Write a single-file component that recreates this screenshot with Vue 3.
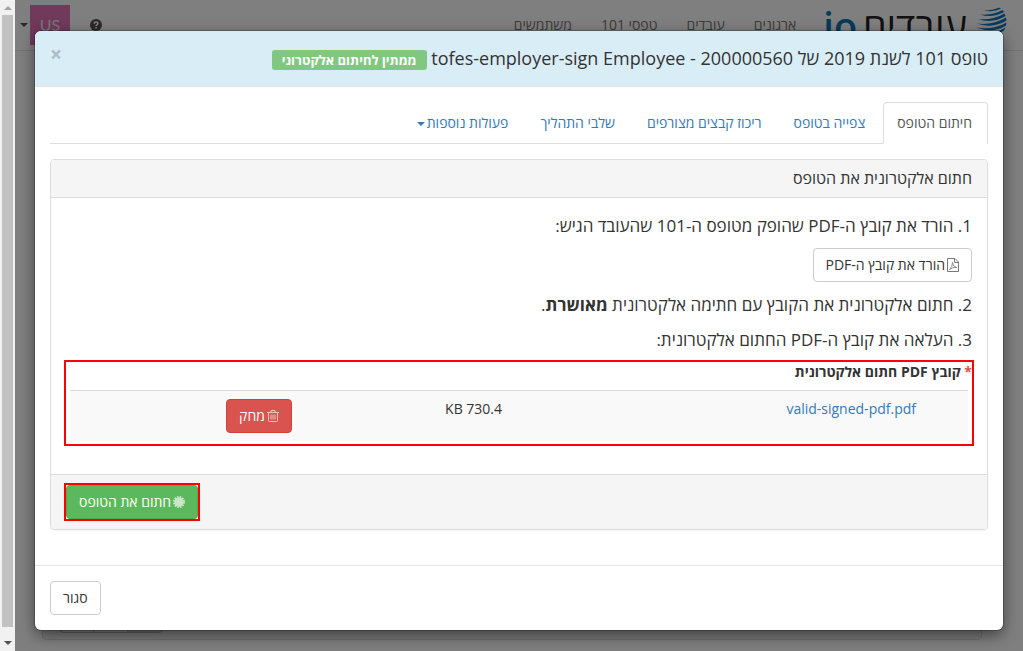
<script setup>
import { ref } from 'vue'

const navLinks = ['ארגונים', 'עובדים', 'טפסי 101', 'משתמשים']
const tabs = [
  { label: 'חיתום הטופס' },
  { label: 'צפייה בטופס' },
  { label: 'ריכוז קבצים מצורפים' },
  { label: 'שלבי התהליך' },
  { label: 'פעולות נוספות', dropdown: true },
]
const activeTab = ref(0)
const files = [{ name: 'valid-signed-pdf.pdf', size: '730.4 KB' }]
</script>

<template>
  <div class="viewport" dir="rtl">
    <div class="screen">
      <div class="page">
        <header class="navbar">
          <a class="brand" href="#">
            <svg class="brand-mark" viewBox="0 0 32 32" width="32" height="32" fill="#0c75b8">
              <path d="M9 4.500 Q18 4.500 24 1.500 L26 2.800 Q18 6.500 9 4.500 Z" />
              <path d="M5 8.500 Q18 9.500 27.500 4 L29 6 Q17 12.500 5 8.500 Z" />
              <path d="M3 13 Q18 14.500 29.500 7.500 L30.500 10 Q17 18 3 13 Z" />
              <path d="M1.500 17.500 Q18 19.500 31 11.500 L31.500 14.500 Q18 23 1.500 17.500 Z" />
              <path d="M1.500 21.500 Q18 24.500 31.500 16.500 L31 19.500 Q18 28 1.500 21.500 Z" />
              <path d="M4 25.500 Q18 29 30.500 21.500 L29 24.500 Q18 31.500 4 25.500 Z" />
            </svg>
            <span class="brand-name">עובדים</span>
            <span class="brand-io">io</span>
          </a>
          <nav class="nav-links">
            <a v-for="link in navLinks" :key="link" href="#">{{ link }}</a>
          </nav>
          <div class="nav-user">
            <a class="help" href="#" aria-label="עזרה">
              <svg viewBox="0 0 12 12" width="12" height="12">
                <circle cx="6" cy="6" r="6" fill="#555" />
                <path d="M4.200 4.700 Q4.200 2.900 6 2.900 Q7.900 2.900 7.900 4.500 Q7.900 5.300 6.900 5.900 Q6.100 6.300 6.100 7.100" fill="none" stroke="#fff" stroke-width="1.500" />
                <rect x="5.300" y="8" width="1.600" height="1.500" fill="#fff" />
              </svg>
            </a>
            <button class="avatar" type="button">US</button>
            <span class="caret dark"></span>
          </div>
        </header>
        <div class="back-panel">
          <div class="pager"><span></span><span></span><span class="on"></span></div>
        </div>
      </div>

      <div class="backdrop">
        <section class="modal" role="dialog" aria-labelledby="modal-title">
          <header class="modal-header">
            <h4 id="modal-title">
              טופס 101 לשנת 2019 של 200000560 - tofes-employer-sign Employee
              <span class="label">ממתין לחיתום אלקטרוני</span>
            </h4>
            <button class="close" type="button" aria-label="סגור חלון">×</button>
          </header>

          <div class="modal-body">
            <ul class="tabs">
              <li v-for="(tab, i) in tabs" :key="tab.label">
                <a href="#" :class="{ active: i === activeTab }" @click.prevent="activeTab = i">{{ tab.label }}<span v-if="tab.dropdown" class="caret"></span></a>
              </li>
            </ul>

            <div class="panel">
              <h3 class="panel-heading">חתום אלקטרונית את הטופס</h3>
              <div class="panel-body">
                <p class="step">1. הורד את קובץ ה-PDF שהופק מטופס ה-101 שהעובד הגיש:</p>
                <button class="btn download" type="button">
                  <svg viewBox="0 0 12 14" width="12" height="14" fill="none" stroke="currentColor">
                    <path d="M.5 .5 H8 L11.500 4 V13.500 H.5 Z M7.500 .5 V4.500 H11.500" />
                    <path d="M2.500 11.500 Q5.500 9 5.500 4.500 Q6 9 9.700 9.500 Q6 8.700 2.500 11.500" stroke-width=".8" />
                  </svg>
                  הורד את קובץ ה-PDF
                </button>
                <p class="step">2. חתום אלקטרונית את הקובץ עם חתימה אלקטרונית <strong>מאושרת</strong>.</p>
                <p class="step">3. העלאה את קובץ ה-PDF החתום אלקטרונית:</p>
                <div class="upload marked">
                  <div id="upload-label" class="upload-label"><span class="req">*</span> קובץ PDF חתום אלקטרונית</div>
                  <table aria-labelledby="upload-label">
                    <colgroup><col class="c-preview"><col class="c-name"><col class="c-size"><col></colgroup>
                    <tbody>
                      <tr v-for="file in files" :key="file.name">
                        <td></td>
                        <td><a href="#">{{ file.name }}</a></td>
                        <td>{{ file.size }}</td>
                        <td>
                          <button class="btn danger" type="button">
                            <svg viewBox="0 0 12 12" width="12" height="12" fill="none" stroke="currentColor">
                              <path d="M0 2.500 H12 M4 2.500 V.5 H8 V2.500 M1.500 2.500 V10.500 Q1.500 11.500 2.500 11.500 H9.500 Q10.500 11.500 10.500 10.500 V2.500 M4 4.500 V9.500 M6 4.500 V9.500 M8 4.500 V9.500" />
                            </svg>
                            מחק
                          </button>
                        </td>
                      </tr>
                    </tbody>
                  </table>
                </div>
              </div>
              <div class="panel-footer">
                <div class="sign marked">
                  <button class="btn success" type="button">
                    <svg viewBox="0 0 12 12" width="12" height="12">
                      <circle cx="6" cy="6" r="4.800" fill="currentColor" />
                      <circle cx="6" cy="6" r="5.200" fill="none" stroke="currentColor" stroke-width="1.800" stroke-dasharray="1.600 1.123" />
                    </svg>
                    חתום את הטופס
                  </button>
                </div>
              </div>
            </div>
          </div>

          <footer class="modal-footer">
            <button class="btn" type="button">סגור</button>
          </footer>
        </section>
      </div>
    </div>

    <div class="scrollbar" aria-hidden="true">
      <span class="arrow up"></span>
      <span class="thumb"></span>
      <span class="arrow down"></span>
    </div>
  </div>
</template>

<style>
body {
  margin: 0;
}
</style>

<style scoped>
.viewport,
.viewport * {
  box-sizing: border-box;
}
.viewport {
  display: flex;
  min-height: 100vh;
  font: 14px/20px "Open Sans", sans-serif;
  color: #333;
}
a {
  color: #337ab7;
  text-decoration: none;
}
button {
  font: inherit;
  cursor: pointer;
}
.screen {
  position: relative;
  flex: 1;
  min-width: 0;
}
.scrollbar {
  width: 15px;
  background: #f1f1f1;
  display: flex;
  flex-direction: column;
  align-items: center;
  padding: 6px 0;
  gap: 5px;
}
.thumb {
  flex: 1;
  width: 11px;
  background: #c1c1c1;
  margin-bottom: 9px;
}
.arrow {
  border: 4px solid transparent;
}
.up {
  border-top: 0;
  border-bottom-color: #a3a3a3;
}
.down {
  border-bottom: 0;
  border-top-color: #505050;
}

.page {
  min-height: 100%;
  display: flex;
  flex-direction: column;
  background: #fff;
  padding-bottom: 11px;
}
.navbar {
  display: flex;
  align-items: center;
  height: 51px;
  border-bottom: 1px solid #e7e7e7;
  padding-right: 16px;
}
.brand {
  display: flex;
  align-items: center;
  font-size: 38px;
  line-height: 50px;
}
.brand-mark {
  margin-bottom: 6px;
}
.brand-name {
  margin-right: 8px;
  color: #222;
  font-weight: 500;
}
.brand-io {
  margin-right: 6px;
  color: #0c75b8;
  font-weight: 600;
}
.nav-links {
  display: flex;
  gap: 29px;
  margin-right: 27px;
}
.nav-links a {
  color: #777;
}
.nav-user {
  display: flex;
  align-items: center;
  margin-right: auto;
  padding-left: 5px;
}
.help {
  display: flex;
  margin-left: 20px;
}
.avatar {
  width: 40px;
  height: 40px;
  padding: 0;
  border: 0;
  background: #e273b9;
  color: #eee;
  font-family: Lato, sans-serif;
  font-size: 16px;
}
.caret {
  display: inline-block;
  margin-right: 2px;
  vertical-align: middle;
  border: 4px solid transparent;
  border-top-color: currentColor;
  border-bottom: 0;
}
.dark {
  color: #555;
}
.back-panel {
  flex: 1;
  display: flex;
  align-items: flex-end;
  justify-content: flex-end;
  margin: 20px 41px 0 27px;
  padding: 0 16px 6px;
  border: 1px solid #ddd;
  border-radius: 4px;
  background: #f5f5f5;
}
.pager {
  display: flex;
  direction: ltr;
  border: 1px solid #bbb;
  border-radius: 4px;
}
.pager span {
  width: 34px;
  height: 32px;
  border-right: 1px solid #bbb;
}
.pager .on {
  background: #ddd;
}

.backdrop {
  position: absolute;
  inset: 0;
  padding: 31px 20px 20px;
  background: rgba(0, 0, 0, 0.5);
}
.modal {
  background: #fff;
  border-radius: 6px;
  box-shadow: 0 0 0 1px rgba(0, 0, 0, 0.2), 0 5px 15px rgba(0, 0, 0, 0.5);
}
.modal-header {
  display: flex;
  justify-content: space-between;
  align-items: flex-start;
  padding: 15px;
  background: #d9edf7;
  border-bottom: 1px solid #e5e5e5;
  border-radius: 6px 6px 0 0;
}
h4,
h3,
p,
ul {
  margin: 0;
  padding: 0;
}
h4 {
  font-size: 18px;
  line-height: 25px;
  font-weight: 400;
}
.label {
  display: inline-block;
  padding: 0 10px;
  border-radius: 3px;
  background: #80c780;
  color: #fff;
  font-size: 13px;
  line-height: 20px;
  font-weight: 700;
}
.close {
  padding: 0;
  border: 0;
  background: none;
  color: #aebec6;
  font-size: 21px;
  line-height: 16px;
  font-weight: 700;
}
.modal-body {
  padding: 15px 15px 35px;
}
.tabs {
  display: flex;
  gap: 2px;
  list-style: none;
  border-bottom: 1px solid #ddd;
}
.tabs a {
  display: block;
  padding: 10px 15px 10px 13px;
  margin-bottom: -1px;
  border: 1px solid transparent;
  border-radius: 4px 4px 0 0;
}
.tabs .active {
  color: #555;
  background: #fff;
  border-color: #ddd;
  border-bottom-color: #fff;
}
.panel {
  margin-top: 15px;
  border: 1px solid #ddd;
  border-radius: 4px;
  box-shadow: 0 1px 1px rgba(0, 0, 0, 0.05);
}
.panel-heading {
  padding: 10px 15px;
  background: #f5f5f5;
  border-bottom: 1px solid #ddd;
  border-radius: 3px 3px 0 0;
  font-size: 16px;
  line-height: 17px;
  font-weight: 400;
}
.panel-body {
  padding: 15px 15px 30px;
}
.step {
  margin-bottom: 9px;
  font-size: 17px;
  line-height: 26px;
}
.btn {
  display: inline-flex;
  align-items: center;
  gap: 2px;
  padding: 6px 12px;
  border: 1px solid #ccc;
  border-radius: 4px;
  background: #fff;
  color: #333;
}
.btn svg {
  opacity: 0.65;
}
.download {
  display: flex;
  margin-bottom: 10px;
}
.danger {
  background: #d9534f;
  border-color: #d43f3a;
  color: #fff;
}
.success {
  background: #5cb85c;
  border-color: #4cae4c;
  color: #fff;
}
.marked {
  outline: 2px solid #f00;
}
.sign {
  display: flex;
}
.upload {
  padding: 0 4px 3px;
}
.upload-label {
  margin: 0 -4px 8px;
  font-weight: 700;
}
.req {
  color: #d9534f;
}
table {
  width: 100%;
  table-layout: fixed;
  border-collapse: separate;
  border-spacing: 0;
}
.c-preview {
  width: 4.9%;
}
.c-name {
  width: 46.1%;
}
.c-size {
  width: 23.4%;
}
td {
  padding: 8px;
  vertical-align: top;
  border-top: 1px solid #ddd;
  background: #f9f9f9;
}
td .btn {
  vertical-align: top;
}
.panel-footer {
  display: flex;
  justify-content: flex-end;
  padding: 10px 15px;
  background: #f5f5f5;
  border-top: 1px solid #ddd;
  border-radius: 0 0 3px 3px;
}
.modal-footer {
  display: flex;
  justify-content: flex-end;
  padding: 15px;
  border-top: 1px solid #e5e5e5;
}
</style>
